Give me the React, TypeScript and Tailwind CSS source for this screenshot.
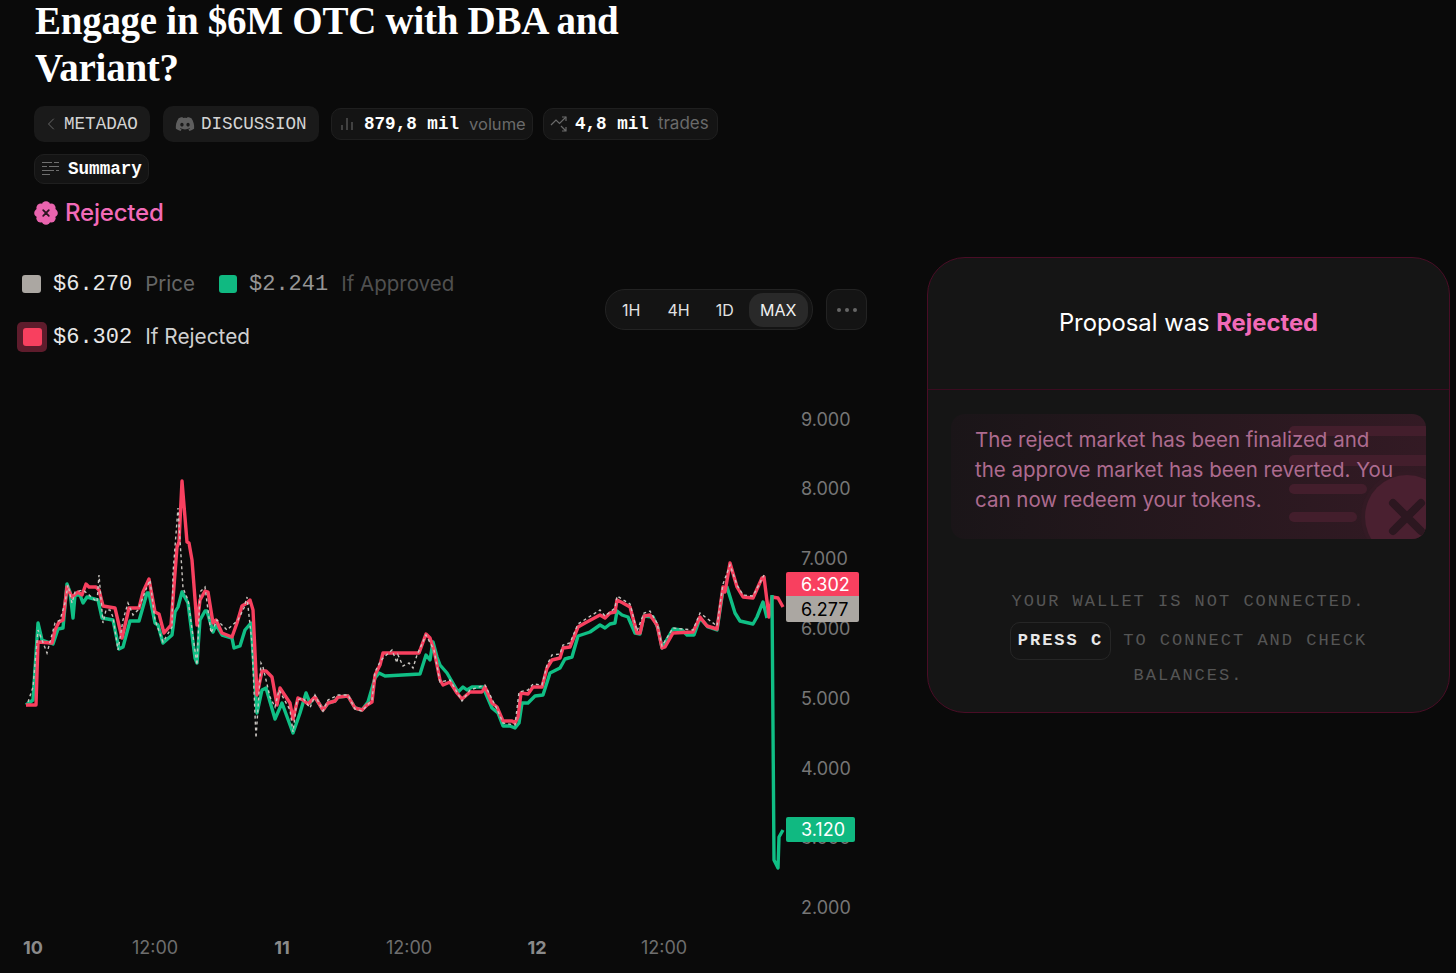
import { ChevronLeft } from 'lucide-react';
import { FaDiscord } from 'react-icons/fa';

const mono = "[font-family:'Liberation_Mono',monospace]";

// chart lines, in page coordinates
const redLine =
  '26,705 36,705 38,642 52,643 55,630 59,622 63,620 67,587 72,597 78,592 82,595 86,584 89,587 96,587 99,590 103,606 115,608 122,638 129,608 139,608 143,592 149,579 155,612 159,614 164,633 171,625 177,547 179,542 182,481 187,542 189,543 192,560 197,625 200,600 205,591 208,592 213,623 216,620 222,633 232,637 237,623 242,606 247,603 250,600 253,610 257,695 262,671 266,671 272,677 277,705 280,688 290,703 293,719 298,698 303,700 308,704 315,697 323,710 328,703 335,701 338,697 348,696 355,708 362,710 367,705 372,702 375,675 380,665 383,653 419,653 426,634 430,638 434,650 440,680 443,685 450,682 457,693 462,699 470,692 482,692 485,687 492,703 497,707 503,721 512,721 515,723 518,717 521,693 528,694 533,687 542,687 547,668 552,660 560,658 563,648 570,647 578,627 585,623 600,615 605,618 610,613 615,612 617,600 623,603 630,607 637,633 640,633 644,616 650,615 657,625 662,648 665,647 673,633 693,632 700,617 707,626 717,629 723,587 725,592 730,563 737,587 743,597 753,598 762,578 764,577 769,617 772,597 778,598 783,607';

const greenLine =
  '26,705 33,700 38,623 42,640 53,644 58,629 63,628 67,584 70,592 73,618 75,595 80,595 83,603 87,597 98,600 102,618 113,620 119,649 123,647 130,621 139,621 147,593 149,593 155,623 158,625 163,643 172,635 175,612 178,607 182,592 188,603 195,658 197,663 200,620 205,611 207,611 213,632 216,625 222,635 232,638 234,648 240,646 245,630 251,623 257,713 262,690 266,688 275,719 282,703 293,733 300,713 306,693 310,703 315,697 323,710 328,703 335,701 338,697 348,696 355,708 362,710 368,702 375,678 379,673 385,676 420,674 426,655 430,660 433,642 437,657 440,665 447,673 458,692 463,687 467,690 472,687 483,687 492,708 498,713 503,726 510,726 515,728 519,723 522,703 528,703 535,696 543,695 550,673 560,668 565,659 572,657 578,636 590,632 600,625 605,628 610,624 615,623 617,611 622,615 628,617 635,633 640,634 644,616 653,617 658,628 662,648 673,629 682,630 687,635 694,635 700,618 708,627 717,630 723,590 727,587 735,613 740,621 753,624 757,617 763,602 767,618';

const greenDrop = '772,595 774,860 778,868 779,837 783,830';

const greyLine =
  '28,702 33,687 38,630 42,640 47,653 50,642 55,623 60,620 65,603 68,585 72,603 75,592 83,590 88,594 97,602 99,575 103,623 106,610 110,610 113,617 118,650 123,620 128,603 133,615 138,610 147,587 150,580 155,620 163,642 172,627 173,573 178,508 183,588 188,600 197,665 200,592 205,587 211,633 217,620 227,630 238,620 244,608 247,597 252,643 256,738 261,663 263,667 270,697 275,707 279,690 290,710 293,732 297,700 303,698 310,708 315,695 323,711 328,700 338,695 348,695 355,709 362,711 372,700 375,672 380,662 383,658 392,650 397,663 398,655 403,666 409,663 413,668 417,655 426,635 434,650 440,682 450,680 462,701 470,690 485,685 497,709 503,723 515,725 519,692 528,690 533,684 542,685 547,665 552,655 560,654 563,645 570,643 578,624 600,610 605,616 615,608 617,596 630,604 637,631 644,613 650,611 657,623 662,646 673,628 693,630 700,613 717,626 723,584 730,565 737,585 743,595 753,596 764,575';

const yTicks = ['9.000', '8.000', '7.000', '6.000', '5.000', '4.000', '3.000', '2.000'];
const xTicks = [
  { label: '10', x: 33, bold: true },
  { label: '12:00', x: 155, bold: false },
  { label: '11', x: 282, bold: true },
  { label: '12:00', x: 409, bold: false },
  { label: '12', x: 537, bold: true },
  { label: '12:00', x: 664, bold: false },
];

// scallops of the rejected badge
const scallops = [
  [12, 4.6],
  [17.2, 6.8],
  [19.4, 12],
  [17.2, 17.2],
  [12, 19.4],
  [6.8, 17.2],
  [4.6, 12],
  [6.8, 6.8],
];

function BarsIcon() {
  return (
    <svg width="14" height="14" viewBox="0 0 14 14" className="text-[#5a5a5a]">
      <path d="M2 13V8M7 13V1M12 13V5" stroke="currentColor" strokeWidth="1.3" fill="none" />
    </svg>
  );
}

function TradesIcon() {
  return (
    <svg width="18" height="18" viewBox="0 0 18 18" fill="none" stroke="#6a6a6a" strokeWidth="1.2">
      <path d="M1 10l5-5 3.5 3.5L16 2" />
      <path d="M12 2h4v4" />
      <path d="M11 11l5 5M16 12v4h-4" />
    </svg>
  );
}

function SummaryIcon() {
  return (
    <svg width="19" height="16" viewBox="0 0 19 16" fill="none" stroke="#6f6f6f" strokeWidth="1.2">
      <path d="M1 1.5h10M13 1.5h5M1 5.5h5M8 5.5h10M1 9.5h12M15 9.5h3M1 13.5h8" />
    </svg>
  );
}

function RejectedBadge() {
  return (
    <svg width="24" height="24" viewBox="0 0 24 24">
      <circle cx="12" cy="12" r="8" fill="#e964ae" />
      {scallops.map(([cx, cy]) => (
        <circle key={`${cx}-${cy}`} cx={cx} cy={cy} r="4.4" fill="#e964ae" />
      ))}
      <path d="M9.2 9.2l5.6 5.6M14.8 9.2l-5.6 5.6" stroke="#2a1420" strokeWidth="1.8" strokeLinecap="round" />
    </svg>
  );
}

function Pill({ children, className }: { children: React.ReactNode; className: string }) {
  return <div className={`flex items-center rounded-[10px] ${className}`}>{children}</div>;
}

export default function App() {
  return (
    <div className="flex h-[973px] w-full justify-between overflow-hidden bg-[#0a0a0a] [font-family:Inter,sans-serif]">
      {/* Left column */}
      <div className="relative w-[927px] shrink-0">
        <h1 className="-mt-[3px] w-[640px] pl-[35px] [font-family:'Liberation_Serif',serif] text-[39px] leading-[47px] font-bold tracking-[-0.27px] text-white">
          Engage in $6M OTC with DBA and Variant?
        </h1>

        <div className={`mt-[15px] flex items-center pl-[34px] text-[17.6px] ${mono}`}>
          <Pill className="h-[36px] w-[116px] gap-[3px] bg-[#1a1a1a] pl-[7px] text-[#d4d4d4]">
            <ChevronLeft size={20} strokeWidth={1} className="text-[#777]" />
            <span>METADAO</span>
          </Pill>
          <Pill className="ml-[13px] h-[36px] w-[156px] gap-[6px] bg-[#1a1a1a] pl-[12px] text-[#d4d4d4]">
            <FaDiscord size={20} className="text-[#5e5e5e]" />
            <span>DISCUSSION</span>
          </Pill>
          <Pill className="ml-[12px] h-[32px] w-[202px] gap-[10px] border border-[#1f1f1f] bg-[#141414] pl-[8px]">
            <BarsIcon />
            <span className="font-bold text-white">879,8 mil</span>
            <span className="[font-family:Inter,sans-serif] text-[16.5px] text-[#6a6a6a]">volume</span>
          </Pill>
          <Pill className="ml-[10px] h-[32px] w-[175px] gap-[7px] border border-[#1f1f1f] bg-[#141414] pl-[6px]">
            <TradesIcon />
            <span className="font-bold text-white">4,8 mil</span>
            <span className="ml-[2px] [font-family:Inter,sans-serif] text-[17px] text-[#6a6a6a]">trades</span>
          </Pill>
        </div>

        <div className={`mt-[12px] pl-[34px] text-[17.6px] ${mono}`}>
          <Pill className="h-[30px] w-[115px] gap-[8px] border border-[#1f1f1f] bg-[#141414] pl-[6px]">
            <SummaryIcon />
            <span className="font-bold text-white">Summary</span>
          </Pill>
        </div>

        <div className="mt-[13px] flex h-[32px] items-center gap-[7px] pl-[34px] text-[24px] font-medium text-[#f26ab8]">
          <RejectedBadge />
          <span className="tracking-[-0.2px]">Rejected</span>
        </div>

        {/* Legend and range buttons */}
        <div className="mt-[40px] flex h-[101px] items-start justify-between pr-[60px]">
          <div className="w-[500px] pl-[17px] text-[20.5px]">
            <div className="flex h-[30px] items-center">
              <span className="ml-[5px] h-[18px] w-[19px] rounded-[3px] bg-[#aba7a2]" />
              <span className={`ml-[12px] text-[22px] text-[#e8e8e8] ${mono}`}>$6.270</span>
              <span className="ml-[13px] text-[#666]">Price</span>
              <span className="ml-[24px] h-[18px] w-[18px] rounded-[3px] bg-[#10b981]" />
              <span className={`ml-[12px] text-[22px] text-[#969696] ${mono}`}>$2.241</span>
              <span className="ml-[13px] text-[#505050]">If Approved</span>
            </div>
            <div className="mt-[23px] flex h-[30px] items-center">
              <span className="flex h-[30px] w-[30px] items-center justify-center rounded-[5px] bg-[#5e1c2c]">
                <span className="h-[18px] w-[19px] rounded-[3px] bg-[#f8405f]" />
              </span>
              <span className={`ml-[6px] text-[22px] text-[#e8e8e8] ${mono}`}>$6.302</span>
              <span className="ml-[13px] text-[20.8px] text-[#d0d0d0]">If Rejected</span>
            </div>
          </div>
          <div className="mt-[20px] flex items-center gap-[13px]">
            <div className="flex h-[41px] w-[208px] items-center rounded-[20px] border border-[#232323] bg-[#141414] pl-[16px] text-[16px] text-[#e2e2e2]">
              <span>1H</span>
              <span className="ml-[27px]">4H</span>
              <span className="ml-[26px]">1D</span>
              <span className="ml-[15px] flex h-[34px] w-[59px] items-center justify-center rounded-[14px] bg-[#292929] text-[#f0f0f0]">MAX</span>
            </div>
            <div className="flex h-[41px] w-[41px] items-center justify-center gap-[4px] rounded-[12px] border border-[#232323] bg-[#141414]">
              <span className="h-[4px] w-[4px] rounded-full bg-[#666]" />
              <span className="h-[4px] w-[4px] rounded-full bg-[#666]" />
              <span className="h-[4px] w-[4px] rounded-full bg-[#666]" />
            </div>
          </div>
        </div>

        {/* Chart, viewBox keeps page coordinates */}
        <div className="relative h-[603px] w-[927px]">
          <svg width="927" height="603" viewBox="0 370 927 603" className="block">
            {yTicks.map((t, i) => (
              <text key={t} x="801" y={425.5 + i * 69.8} fontSize="18" fill="#767676" fontFamily="Inter, sans-serif">
                {t}
              </text>
            ))}
            {xTicks.map((t) => (
              <text
                key={t.label + t.x}
                x={t.x}
                y="954"
                textAnchor="middle"
                fontSize="18"
                fontWeight={t.bold ? 700 : 400}
                fill={t.bold ? '#8a8a8a' : '#6e6e6e'}
                fontFamily="Inter, sans-serif"
              >
                {t.label}
              </text>
            ))}
            <polyline points={greenLine} fill="none" stroke="#10bf85" strokeWidth="3.4" strokeLinejoin="round" />
            <polyline points={redLine} fill="none" stroke="#f8405f" strokeWidth="3.4" strokeLinejoin="round" />
            <polyline points={greyLine} fill="none" stroke="#c8c4bf" strokeWidth="1.4" strokeDasharray="3 3" />
            <polyline points={greenDrop} fill="none" stroke="#10bf85" strokeWidth="3.4" strokeLinejoin="round" />
          </svg>

          <div className="absolute top-[202px] left-[786px] flex h-[24px] w-[73px] items-center rounded-t-[2px] bg-[#f8405f] pl-[15px] text-[18px] text-white">6.302</div>
          <div className="absolute top-[226px] left-[786px] flex h-[26px] w-[73px] items-center rounded-b-[2px] bg-[#aba7a2] pl-[15px] text-[18px] text-black">6.277</div>
          <div className="absolute top-[447px] left-[786px] flex h-[25px] w-[69px] items-center rounded-[2px] bg-[#10b981] pl-[15px] text-[18px] text-white">3.120</div>
        </div>
      </div>

      {/* Right panel */}
      <div className="mt-[257px] mr-[6px] h-[456px] w-[523px] shrink-0 rounded-[38px] border border-[#4a0d26] bg-[#151515]">
        <div className="flex h-[132px] items-center justify-center border-b border-[#3a0c20] pb-[2px] text-[23.8px] text-white">
          <span>
            Proposal was <span className="font-bold text-[#f26ab8]">Rejected</span>
          </span>
        </div>
        <div className="relative mx-[23px] mt-[24px] h-[125px] w-[475px] overflow-hidden rounded-[14px] bg-gradient-to-r from-[#1a1518] to-[#331a24] py-[11px] pr-[30px] pl-[24px] text-[20.5px] leading-[30px] text-[#ad6b8f]">
          <svg width="137" height="125" viewBox="0 0 137 125" className="absolute top-0 right-0">
            <rect x="0" y="12" width="150" height="10" rx="5" fill="#431e2c" />
            <rect x="0" y="41" width="150" height="11" rx="5" fill="#431e2c" />
            <rect x="0" y="70" width="78" height="10" rx="5" fill="#431e2c" />
            <rect x="0" y="98" width="68" height="10" rx="5" fill="#431e2c" />
            <circle cx="118" cy="103" r="46" fill="#331a24" />
            <circle cx="118" cy="103" r="42" fill="#4a2030" />
            <path d="M104 89l28 28M132 89l-28 28" stroke="#2c1720" strokeWidth="8" strokeLinecap="round" />
          </svg>
          <p className="relative">
            The reject market has been finalized and
            <br />
            the approve market has been reverted. You
            <br />
            can now redeem your tokens.
          </p>
        </div>
        <div className={`mt-[48px] flex flex-col items-center text-[17px] tracking-[2px] text-[#555] ${mono}`}>
          <div className="flex h-[30px] items-center">YOUR WALLET IS NOT CONNECTED.</div>
          <div className="mt-[5px] flex h-[38px] items-center">
            <span className="flex h-[38px] items-center rounded-[10px] border border-[#262626] px-[7px] font-bold text-[#e8e8e8]">PRESS C</span>
            <span className="ml-[12px]">TO CONNECT AND CHECK</span>
          </div>
          <div className="mt-[1px] flex h-[30px] items-center">BALANCES.</div>
        </div>
      </div>
    </div>
  );
}
